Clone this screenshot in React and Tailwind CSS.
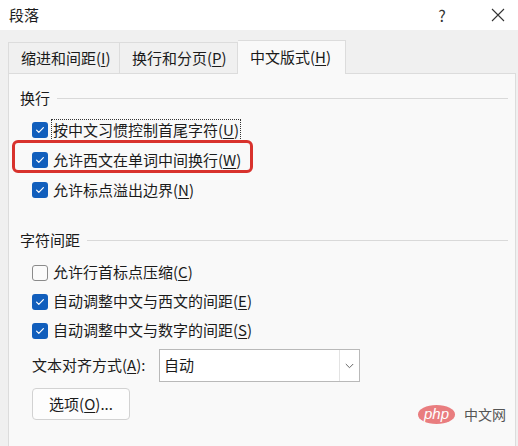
import React from 'react';

const font = { fontFamily: '"Noto Sans CJK SC", "Noto Sans", sans-serif' };

const CheckBox = ({ checked }) =>
    checked ? (
        <span className="w-[16px] h-[16px] rounded-[3px] bg-[#115ebc] flex items-center justify-center shrink-0">
            <svg width="12" height="12" viewBox="0 0 12 12" fill="none">
                <path d="M2.6 6.2l2.2 2.2 4.6-4.8" stroke="#fff" strokeWidth="1.2" strokeLinecap="round" strokeLinejoin="round" />
            </svg>
        </span>
    ) : (
        <span className="w-[16px] h-[16px] rounded-[3px] border border-[#8b8b8b] bg-[#fbfbfb] shrink-0" />
    );

const Key = ({ children }) => <span className="underline underline-offset-2">{children}</span>;

const Row = ({ checked, focused, h = 'h-[30px]', children }) => (
    <div className={`${h} flex items-center pl-[23px]`}>
        <CheckBox checked={checked} />
        <span
            className={`ml-[3px] px-[1px] h-[22px] flex items-center border ${
                focused ? 'border-dotted border-[#333]' : 'border-transparent'
            }`}
        >
            {children}
        </span>
    </div>
);

const Section = ({ title }) => (
    <div className="h-[20px] flex items-center pl-[11px] pr-[7px]">
        <span>{title}</span>
        <span className="flex-1 h-px bg-[#d9d9d9] ml-[7px]" />
    </div>
);

const App = () => {
    return (
        <div className="w-[518px] h-[446px] bg-[#f0f0f0] flex flex-col overflow-hidden text-[15px] text-[#1b1b1b] relative" style={font}>
            {/* title bar */}
            <div className="h-[30px] bg-white flex items-center pl-[9px] shrink-0">
                <span>段落</span>
                <span className="ml-auto w-[14px] text-center text-[16px] text-[#333]">?</span>
                <span className="ml-[42px] mr-[13px] flex items-center">
                    <svg width="14" height="14" viewBox="0 0 14 14">
                        <path d="M1 1l12 12M13 1L1 13" stroke="#333" strokeWidth="1.1" />
                    </svg>
                </span>
            </div>

            {/* tabs */}
            <div className="flex items-end pl-[8px] mt-[10px] h-[33px] shrink-0">
                <div className="w-[112px] h-[31px] border border-b-0 border-[#dcdcdc] bg-[#f0f0f0] pl-[12px] flex items-center">
                    缩进和间距(<Key>I</Key>)
                </div>
                <div className="w-[118px] h-[31px] border border-l-0 border-b-0 border-[#dcdcdc] bg-[#f0f0f0] pl-[12px] flex items-center">
                    换行和分页(<Key>P</Key>)
                </div>
                <div className="w-[108px] h-[34px] -mb-px relative z-10 border border-l-0 border-b-0 border-[#dcdcdc] bg-[#f9f9f9] pl-[12px] flex items-center">
                    中文版式(<Key>H</Key>)
                </div>
            </div>

            {/* panel */}
            <div className="flex-1 ml-[8px] mr-[2px] bg-[#f9f9f9] border border-b-0 border-[#dcdcdc] pt-[14px]">
                <Section title="换行" />
                <div className="mt-[7px]">
                    <Row checked focused>
                        按中文习惯控制首尾字符(<Key>U</Key>)
                    </Row>
                    <div className="relative">
                        <Row checked>
                            允许西文在单词中间换行(<Key>W</Key>)
                        </Row>
                        <div className="absolute left-[3px] -top-[5px] w-[241px] h-[33px] border-[3px] border-[#d8322d] rounded-[6px]" />
                    </div>
                    <Row checked>
                        允许标点溢出边界(<Key>N</Key>)
                    </Row>
                </div>

                <div className="mt-[25px]">
                    <Section title="字符间距" />
                </div>
                <div className="mt-[8px]">
                    <Row h="h-[29px]">
                        允许行首标点压缩(<Key>C</Key>)
                    </Row>
                    <Row checked h="h-[29px]">
                        自动调整中文与西文的间距(<Key>E</Key>)
                    </Row>
                    <Row checked h="h-[29px]">
                        自动调整中文与数字的间距(<Key>S</Key>)
                    </Row>
                </div>

                <div className="mt-[4px] h-[33px] flex items-center pl-[23px]">
                    <span className="w-[127px]">
                        文本对齐方式(<Key>A</Key>):
                    </span>
                    <div className="w-[201px] h-[33px] bg-white border border-[#b9b9b9] flex items-stretch">
                        <span className="flex-1 flex items-center pl-[4px]">自动</span>
                        <span className="w-[20px] border-l border-[#e3e3e3] flex items-center justify-center">
                            <svg width="9" height="6" viewBox="0 0 9 6">
                                <path d="M0.8 1l3.7 3.7L8.2 1" stroke="#666" strokeWidth="1" fill="none" />
                            </svg>
                        </span>
                    </div>
                </div>

                <div className="mt-[6px] pl-[23px]">
                    <button className="w-[98px] h-[32px] rounded-[4px] bg-[#fdfdfd] border border-[#d2d2d2] flex items-center justify-center">
                        选项(<Key>O</Key>)...
                    </button>
                </div>
            </div>

            {/* watermark */}
            <div className="absolute left-[418px] top-[404px] flex items-center">
                <span
                    className="w-[37px] h-[19px] rounded-[50%] bg-[#e97d7f] text-white italic text-[15px] leading-none flex items-center justify-center pb-[2px]"
                    style={{ fontFamily: '"Liberation Sans", sans-serif' }}
                >
                    php
                </span>
                <span className="ml-[9px] text-[14px] text-[#555]">中文网</span>
            </div>
        </div>
    );
};

export default App;
